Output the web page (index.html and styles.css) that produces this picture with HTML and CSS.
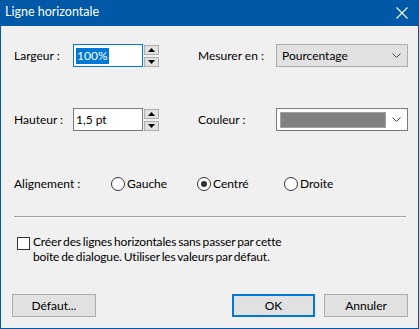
FILE: index.html
```html
<!DOCTYPE html>
<html lang="fr">
<head>
<meta charset="utf-8">
<link rel="stylesheet" href="styles.css">
</head>
<body>
<div class="window">
  <div class="titlebar">
    <span class="title">Ligne horizontale</span>
    <svg class="close" width="12" height="12" viewBox="0 0 12 12"><path d="M0.5 0.5 L11.5 11.5 M11.5 0.5 L0.5 11.5" stroke="#fff" stroke-width="1.1" fill="none"/></svg>
  </div>
  <div class="content">
    <div class="row r1">
      <div class="cell left">
        <span class="label">Largeur :</span>
        <div class="field focus"><span class="sel">100%</span></div>
        <div class="spin">
          <div class="sbtn"><svg width="7" height="4" viewBox="0 0 7 4"><path d="M0 4 L3.5 0 L7 4 Z" fill="#000"/></svg></div>
          <div class="sbtn"><svg width="7" height="4" viewBox="0 0 7 4"><path d="M0 0 L3.5 4 L7 0 Z" fill="#000"/></svg></div>
        </div>
      </div>
      <div class="cell right">
        <span class="label rl">Mesurer en :</span>
        <div class="combo gray"><span>Pourcentage</span>
          <svg class="chev" width="9" height="5" viewBox="0 0 9 5"><path d="M0.5 0.5 L4.5 4.5 L8.5 0.5" stroke="#444" fill="none"/></svg>
        </div>
      </div>
    </div>
    <div class="row r2">
      <div class="cell left">
        <span class="label">Hauteur :</span>
        <div class="field"><span>1,5 pt</span></div>
        <div class="spin">
          <div class="sbtn"><svg width="7" height="4" viewBox="0 0 7 4"><path d="M0 4 L3.5 0 L7 4 Z" fill="#000"/></svg></div>
          <div class="sbtn"><svg width="7" height="4" viewBox="0 0 7 4"><path d="M0 0 L3.5 4 L7 0 Z" fill="#000"/></svg></div>
        </div>
      </div>
      <div class="cell right">
        <span class="label rl">Couleur :</span>
        <div class="combo white"><div class="swatch"></div>
          <svg class="chev" width="9" height="5" viewBox="0 0 9 5"><path d="M0.5 0.5 L4.5 4.5 L8.5 0.5" stroke="#444" fill="none"/></svg>
        </div>
      </div>
    </div>
    <div class="row r3">
      <span class="label al">Alignement :</span>
      <div class="radio g"><span class="circle"></span><span>Gauche</span></div>
      <div class="radio c"><span class="circle on"></span><span>Centré</span></div>
      <div class="radio d"><span class="circle"></span><span>Droite</span></div>
    </div>
    <div class="sep"></div>
    <div class="check">
      <span class="box"></span>
      <div class="ctext">
        <div class="cline">Créer des lignes horizontales sans passer par cette</div>
        <div class="cline">boîte de dialogue. Utiliser les valeurs par défaut.</div>
      </div>
    </div>
    <div class="buttons">
      <div class="btn">Défaut...</div>
      <div class="spacer"></div>
      <div class="btn default">OK</div>
      <div class="btn">Annuler</div>
    </div>
  </div>
</div>
</body>
</html>
```
FILE: styles.css
```css
* { box-sizing: border-box; }
html, body { margin: 0; padding: 0; }
body {
  width: 419px; height: 329px; overflow: hidden;
  font-family: Lato, "Noto Sans", sans-serif;
  font-size: 12px; color: #000;
}
.window {
  width: 419px; height: 329px;
  background: #f0f0f0;
  border: 1px solid #0058a6;
  border-top: none;
  display: flex; flex-direction: column;
}
.titlebar {
  height: 26px; margin: 0 -1px;
  background: #0058a6; color: #fff;
  display: flex; align-items: center; justify-content: space-between;
  padding: 0 10px 0 5px;
  font-size: 12.5px;
}
.title { line-height: 1; padding-bottom: 1px; }
.close { display: block; margin-right: 1px; }
.content { padding: 18px 10px 0 13px; flex: 1; display: flex; flex-direction: column; }
.row { display: flex; align-items: center; }
.r1 { height: 23px; }
.r2 { height: 23px; margin-top: 41px; }
.cell { display: flex; align-items: center; height: 23px; }
.left { width: 184px; }
.label { line-height: 1; }
.left .label { width: 59px; }
.rl { width: 78px; }
.field {
  width: 70px; height: 23px; background: #fff;
  border: 1px solid #7a7a7a;
  display: flex; align-items: center; padding-left: 2px;
}
.field.focus { border-color: #0078d7; }
.sel { background: #0078d7; color: #fff; padding: 0 1px; line-height: 16px; }
.spin { margin-left: 1px; display: flex; flex-direction: column; gap: 2px; }
.sbtn {
  width: 15px; height: 10px; background: #e1e1e1; border: 1px solid #adadad;
  display: flex; align-items: center; justify-content: center;
}
.sbtn svg { display: block; }
.combo {
  width: 132px; height: 23px; display: flex; align-items: center;
  justify-content: space-between; padding: 0 6px 0 5px;
}
.combo.gray { background: #e1e1e1; border: 1px solid #adadad; }
.combo.white { background: #fff; border: 1px solid #7a7a7a; padding-left: 3px; }
.swatch { width: 106px; height: 16px; background: #808080; border: 1px solid #a0a0a0; }
.chev { display: block; }
.r3 { margin-top: 46px; height: 14px; }
.al { width: 97px; }
.radio { display: flex; align-items: center; gap: 2px; line-height: 1; }
.radio.g { width: 86px; }
.radio.c { width: 87px; }
.circle {
  width: 14px; height: 14px; border-radius: 50%; border: 1px solid #333;
  background: #fff; display: flex; align-items: center; justify-content: center;
}
.circle.on::after { content: ""; width: 6px; height: 6px; border-radius: 50%; background: #333; }
.sep { margin-top: 25px; height: 2px; border-top: 1px solid #a0a0a0; border-bottom: 1px solid #fff; width: 392px; }
.check { margin-top: 17px; display: flex; align-items: flex-start; padding-left: 3px; }
.box { width: 13px; height: 13px; border: 1px solid #333; background: #fff; margin-top: 2px; flex: none; }
.ctext { margin-left: 3px; letter-spacing: -0.15px; word-spacing: -1px; }
.cline { height: 14.5px; line-height: 14.5px; }
.buttons { margin-top: 30px; display: flex; margin-left: -2px; }
.spacer { flex: 1; }
.btn {
  width: 84px; height: 23px; background: #e1e1e1; border: 1px solid #adadad;
  display: flex; align-items: center; justify-content: center; line-height: 1;
}
.btn.default { border: 2px solid #0078d7; width: 83px; margin-right: 9px; }
```
